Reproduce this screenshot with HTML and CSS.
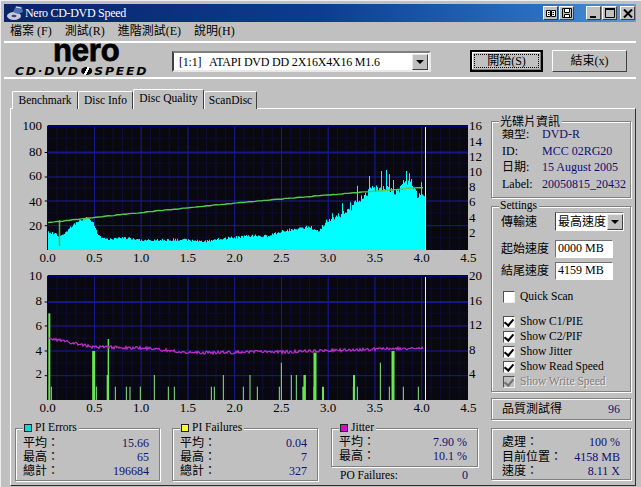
FILE: index.html
```html
<!DOCTYPE html>
<html lang="zh-Hant">
<head>
<meta charset="utf-8">
<title>Nero CD-DVD Speed</title>
<link rel="stylesheet" href="styles.css">
</head>
<body>
<div class="window">
  <div class="titlebar">
    <svg class="app-icon" width="18" height="16" viewBox="0 0 18 16"><ellipse cx="8" cy="11" rx="7" ry="4" fill="#c8c8d8"/><ellipse cx="8" cy="11" rx="2.5" ry="1.3" fill="#404870"/><path d="M7 7 L10 1 L16 2 L17 7 L12 9Z" fill="#5070b0"/><path d="M10 2 L15 3" stroke="#e0e8ff"/></svg>
    <span class="title-text">Nero CD-DVD Speed</span>
    <span class="caption-buttons">
      <span class="cap-btn"><svg width="10" height="9" viewBox="0 0 10 9"><path d="M0.5 1.5H4.5V7.5H0.5ZM5.5 1.5H9.5V7.5H5.5Z" fill="#fff" stroke="#000"/><path d="M2 3.5H3.5M2 5.5H3.5M6.5 3.5H8M6.5 5.5H8" stroke="#000"/></svg></span>
      <span class="cap-btn"><svg width="10" height="10" viewBox="0 0 10 10"><path d="M0.5 0.5H9.5V9.5H0.5Z" fill="#c0c0c0" stroke="#000"/><path d="M2.5 1V4.5H7.5V1M2.5 9V6.5H7.5V9" fill="#fff" stroke="#000"/></svg></span>
      <span class="cap-btn cap-first"><svg width="8" height="9" viewBox="0 0 8 9"><path d="M0 7H6V9H0Z" fill="#000"/></svg></span>
      <span class="cap-btn"><svg width="10" height="10" viewBox="0 0 10 10"><path d="M0.5 1.5H9.5V9.5H0.5Z" fill="none" stroke="#000"/><path d="M0 1H10" stroke="#000" stroke-width="2"/></svg></span>
      <span class="cap-btn cap-close"><svg width="10" height="9" viewBox="0 0 10 9"><path d="M1 0.5L9 8.5M9 0.5L1 8.5" stroke="#000" stroke-width="2"/></svg></span>
    </span>
  </div>
  <div class="menu">
    <span>檔案 (F)</span><span>測試(R)</span><span>進階測試(E)</span><span>說明(H)</span>
  </div>
  <div class="header">
    <div class="logo">
      <div class="logo-nero">nero</div>
      <div class="logo-sub">CD·DVD<i class="logo-disc"></i>SPEED</div>
    </div>
    <div class="drive-select">
      <span class="drive-text">[1:1]&nbsp;&nbsp; ATAPI DVD DD 2X16X4X16 M1.6</span>
      <span class="drop-btn"><i class="arrow"></i></span>
    </div>
    <div class="btn btn-default"><span class="focus">開始(S)</span></div>
    <div class="btn btn-exit">結束(x)</div>
  </div>
  <div class="tabs">
    <span class="tab tab-bench">Benchmark</span>
    <span class="tab tab-info">Disc Info</span>
    <span class="tab tab-active">Disc Quality</span>
    <span class="tab tab-scan">ScanDisc</span>
  </div>
  <div class="panel">
    <div class="left-col">
      <svg id="chart1" class="chart" width="479" height="150" viewBox="12 115 479 150"></svg>
      <svg id="chart2" class="chart" width="479" height="150" viewBox="12 265 479 150"></svg>
      <div class="stats">
        <div class="group stat-box stat-errors">
          <div class="legend legend-swatch"><i class="swatch sw-cyan"></i>PI Errors</div>
          <div class="row"><span>平均：</span><b>15.66</b></div>
          <div class="row"><span>最高：</span><b>65</b></div>
          <div class="row"><span>總計：</span><b>196684</b></div>
        </div>
        <div class="group stat-box stat-fail">
          <div class="legend legend-swatch"><i class="swatch sw-yellow"></i>PI Failures</div>
          <div class="row"><span>平均：</span><b>0.04</b></div>
          <div class="row"><span>最高：</span><b>7</b></div>
          <div class="row"><span>總計：</span><b>327</b></div>
        </div>
        <div class="jitter-col">
          <div class="group stat-box stat-jitter">
            <div class="legend legend-swatch"><i class="swatch sw-magenta"></i>Jitter</div>
            <div class="row"><span>平均：</span><b>7.90 %</b></div>
            <div class="row"><span>最高：</span><b>10.1 %</b></div>
          </div>
          <div class="row po-row"><span>PO Failures:</span><b>0</b></div>
        </div>
      </div>
    </div>
    <div class="right-col">
      <div class="group info-box">
        <div class="legend legend-big">光碟片資訊</div>
        <div class="info-row"><span>類型:</span><b>DVD-R</b></div>
        <div class="info-row"><span>ID:</span><b>MCC 02RG20</b></div>
        <div class="info-row"><span>日期:</span><b>15 August 2005</b></div>
        <div class="info-row"><span>Label:</span><b>20050815_20432</b></div>
      </div>
      <div class="group settings-box">
        <div class="legend">Settings</div>
        <div class="set-row set-speed">
          <span class="set-label">傳輸速</span>
          <span class="mini-select"><span>最高速度</span><span class="drop-btn"><i class="arrow"></i></span></span>
        </div>
        <div class="set-row set-start">
          <span class="set-label">起始速度</span><span class="field">0000 MB</span>
        </div>
        <div class="set-row set-end">
          <span class="set-label">結尾速度</span><span class="field">4159 MB</span>
        </div>
        <div class="check-row quick"><i class="check"></i>Quick Scan</div>
        <div class="checks">
          <div class="check-row"><i class="check on"></i>Show C1/PIE</div>
          <div class="check-row"><i class="check on"></i>Show C2/PIF</div>
          <div class="check-row"><i class="check on"></i>Show Jitter</div>
          <div class="check-row"><i class="check on"></i>Show Read Speed</div>
          <div class="check-row disabled"><i class="check on off"></i>Show Write Speed</div>
        </div>
      </div>
      <div class="group score-box">
        <span>品質測試得</span><b>96</b>
      </div>
      <div class="group progress-box">
        <div class="row"><span>處理：</span><b>100 %</b></div>
        <div class="row"><span>目前位置：</span><b>4158 MB</b></div>
        <div class="row"><span>速度：</span><b>8.11 X</b></div>
      </div>
    </div>
  </div>
</div>
<script src="chart.js"></script>
</body>
</html>
```
FILE: styles.css
```css
* { box-sizing: border-box; }
html, body { margin: 0; padding: 0; }
body {
  width: 641px; height: 487px; overflow: hidden;
  background: #c0c0c0; color: #000;
  font: 11.5px/14px "Liberation Serif", "Noto Sans CJK TC", serif;
}
.window {
  width: 641px; height: 487px; padding: 3px 5px 0 3px;
  border-top: 1px solid #efefef; border-left: 1px solid #efefef;
}
.titlebar {
  height: 18px; display: flex; align-items: center; color: #fff;
  background: linear-gradient(90deg, #0a246a 0%, #0c3c90 50%, #2a70c0 85%, #5a9ad8 100%);
  padding: 0 1px 0 2px;
}
.app-icon { margin-right: 1px; }
.title-text { font-size: 12px; letter-spacing: -0.3px; }
.caption-buttons { margin-left: auto; display: flex; }
.cap-btn {
  width: 15px; height: 14px; background: #c0c0c0; display: flex; align-items: center; justify-content: center;
  border: 1px solid; border-color: #fff #404040 #404040 #fff; margin-left: 1px;
}
.cap-first { margin-left: 12px; }
.cap-close { margin-left: 3px; }
.menu {
  height: 21px; display: flex; align-items: center; gap: 13px; padding: 0 6px 1px 6px;
  font-size: 12px; border-bottom: 2px solid; border-image: linear-gradient(#808080 50%, #fff 50%) 1;
}
.header {
  height: 36px; display: flex; align-items: flex-start;
  border-bottom: 2px solid; border-image: linear-gradient(#808080 50%, #fff 50%) 1;
  padding-left: 11px;
}
.logo { width: 157px; margin-top: -3px; position: relative; z-index: 1; }
.logo-nero {
  font: bold 31px/22px "Liberation Sans", sans-serif; padding-left: 38px;
  -webkit-text-stroke: 0.8px #000; letter-spacing: -0.2px;
}
.logo-sub {
  font: italic bold 11px/11px "DejaVu Sans", sans-serif; letter-spacing: 1.6px; white-space: nowrap;
  transform-origin: left; transform: scaleX(1.12); margin-top: 4px;
}
.logo-disc {
  display: inline-block; width: 10px; height: 8px; border-radius: 50%; margin: 0 2px 0 1px;
  background: linear-gradient(115deg, #000 42%, #fff 42%, #fff 58%, #000 58%);
}
.drive-select {
  width: 259px; height: 21px; margin-top: 8px; background: #fff; display: flex; align-items: center; justify-content: space-between;
  border: 2px solid; border-color: #808080 #e8e8e8 #e8e8e8 #404040; padding: 0 1px 0 5px; font-size: 12px; letter-spacing: -0.2px;
}
.drop-btn {
  width: 16px; height: 16px; background: #c0c0c0; display: flex; align-items: center; justify-content: center;
  border: 1px solid; border-color: #e8e8e8 #404040 #404040 #e8e8e8;
}
.arrow { width: 0; height: 0; border: 4px solid transparent; border-top: 4px solid #000; border-bottom: 0; }
.btn {
  height: 22px; background: #c0c0c0; display: flex; align-items: center; justify-content: center; font-size: 12px;
  border: 1px solid; border-color: #fff #404040 #404040 #fff;
}
.btn-default { width: 73px; margin: 7px 0 0 39px; border: 2px solid #000; box-shadow: inset -1px -1px 0 #808080, inset 1px 1px 0 #fff; padding: 2px; }
.focus { flex: 1; align-self: stretch; border: 1px dotted #000; text-align: center; line-height: 13px; }
.btn-exit { width: 75px; margin: 7px 0 0 9px; }
.tabs { height: 20px; padding: 2px 0 0 8px; display: flex; align-items: flex-end; position: relative; z-index: 2; margin-top: 10px; margin-bottom: -1px; }
.tab {
  height: 18px; line-height: 17px; background: #c0c0c0; text-align: center;
  border: 1px solid; border-color: #fff #404040 transparent #fff; border-bottom: 0; border-radius: 2px 2px 0 0;
}
.tab-bench { width: 66px; }
.tab-info { width: 55px; }
.tab-active { width: 71px; height: 20px; margin-top: -2px; line-height: 16px; padding-bottom: 3px; }
.tab-scan { width: 53px; }
.panel {
  width: 626px; height: 378px; margin-left: 6px; display: flex; padding: 6px 0 0 1px; background: #c0c0c0;
  border: 1px solid; border-color: #fff #303030 #303030 #fff;
}
.left-col { width: 479px; }
.chart { display: block; }
.chart text { font: 13px "Liberation Serif", serif; fill: #000; }
.right-col { width: 140px; padding-top: 6px; }
.group {
  border: 1px solid #808080; position: relative;
  box-shadow: 1px 1px 0 #fff, inset 1px 1px 0 #fff;
}
.legend { position: absolute; left: 7px; top: -8px; background: #c0c0c0; padding: 0 2px 0 1px; height: 13px; line-height: 13px; white-space: nowrap; }
.legend-big { font-size: 12px; top: -7px; height: 14px; line-height: 14px; }
.legend-swatch { display: flex; align-items: center; gap: 3px; }
.swatch { width: 8px; height: 8px; border: 1px solid #202020; display: block; }
.sw-cyan { background: #10d8d8; }
.sw-yellow { background: #f8f830; }
.sw-magenta { background: #d010c8; }
b { font-weight: 400; color: #101070; font-size: 12px; }
.row { display: flex; justify-content: space-between; height: 14px; line-height: 14px; }
.stats { display: flex; margin: 13px 0 0 3px; align-items: flex-start; }
.stat-box { padding: 7px 10px 0 7px; font-size: 12px; }
.stat-errors { width: 145px; height: 53px; }
.stat-fail { width: 146px; height: 53px; margin-left: 12px; }
.jitter-col { width: 147px; margin-left: 13px; }
.stat-jitter { height: 39px; padding-top: 6px; }
.legend-swatch { font-size: 11.5px; }
.po-row { padding: 0 10px 0 9px; margin-top: 1px; }
.info-box { height: 77px; padding: 4px 0 0 10px; }
.info-row { display: flex; height: 16.5px; line-height: 16px; font-size: 12px; }
.info-row span { width: 40px; flex: none; }
.settings-box { height: 186px; margin-top: 8px; padding: 0 0 0 10px; }
.set-row { display: flex; align-items: center; font-size: 12px; }
.set-label { flex: none; width: 54px; margin-left: -1px; }
.set-speed { margin-top: 5px; height: 19px; }
.mini-select {
  width: 69px; height: 19px; background: #fff; display: flex; align-items: center; justify-content: space-between; white-space: nowrap;
  border: 1px solid; border-color: #808080 #fff #fff #404040; padding-left: 2px;
}
.field {
  width: 58px; height: 18px; background: #fff; padding-left: 2px; line-height: 15px; font-size: 12px;
  border: 1px solid; border-color: #707070 #fff #fff #707070;
}
.set-start { margin-top: 9px; height: 18px; }
.set-end { margin-top: 4px; height: 18px; }
.check-row { display: flex; align-items: center; height: 15px; line-height: 15px; }
.quick { margin-top: 9px; }
.checks { margin-top: 10px; }
.check {
  width: 12px; height: 12px; background: #fff; margin: 0 5px 0 1px; flex: none; position: relative;
  border: 1px solid; border-color: #505050 #eee #eee #505050;
}
.check.on::after {
  content: ""; position: absolute; left: 2px; top: 0; width: 4px; height: 7px;
  border: solid #000; border-width: 0 2px 2px 0; transform: rotate(40deg);
}
.check.off { background: #c0c0c0; }
.check.off::after { border-color: #707070; }
.disabled { color: #808080; text-shadow: 1px 1px 0 #f0f0f0; }
.score-box { height: 22px; margin-top: 6px; display: flex; justify-content: space-between; align-items: center; padding: 0 10px; font-size: 12px; }
.progress-box { height: 52px; margin-top: 8px; padding: 6px 10px 0 10px; font-size: 12px; }
.progress-box .row { height: 14.5px; }
```
FILE: chart.js
```javascript
(function () {
  var NS = "http://www.w3.org/2000/svg";
  var X0 = 47.7, XSTEP = 46.75, XEND = 468;

  function el(svg, name, attrs, txt) {
    var e = document.createElementNS(NS, name);
    for (var k in attrs) e.setAttribute(k, attrs[k]);
    if (txt !== undefined) e.textContent = txt;
    svg.appendChild(e);
    return e;
  }
  function rng(seed) {
    return function () {
      seed = (seed * 1664525 + 1013904223) % 4294967296;
      return seed / 4294967296;
    };
  }
  function interp(pts, x) {
    for (var i = 1; i < pts.length; i++) {
      if (x <= pts[i][0]) {
        var a = pts[i - 1], b = pts[i];
        return a[1] + (b[1] - a[1]) * (x - a[0]) / (b[0] - a[0]);
      }
    }
    return pts[pts.length - 1][1];
  }

  function frame(svg, top, bottom, hLines, leftLabels, rightLabels) {
    el(svg, "rect", { x: X0, y: top, width: XEND - X0, height: bottom - top, fill: "#08080e" });
    var i, x;
    for (i = 0; i < 45; i++) {
      x = X0 + i * XSTEP / 5;
      el(svg, "path", { d: "M" + x + " " + top + "V" + bottom, stroke: "#0e0e38", "stroke-width": 1 });
    }
    var h = (bottom - top) / 10;
    for (i = 1; i < 10; i += 2) {
      el(svg, "path", { d: "M" + X0 + " " + (top + i * h) + "H" + XEND, stroke: "#0c0c34", "stroke-width": 1 });
    }
    for (i = 1; i < 9; i++) {
      x = X0 + i * XSTEP;
      el(svg, "path", { d: "M" + x + " " + top + "V" + bottom, stroke: "#1a1a98", "stroke-width": 1 });
    }
    hLines.forEach(function (y, n) {
      el(svg, "path", { d: "M" + X0 + " " + y + "H" + XEND, stroke: n === 0 ? "#16168c" : "#1a1a98", "stroke-width": n === 0 ? 2 : 1 });
      el(svg, "path", { d: "M" + (X0 - 3) + " " + y + "H" + X0, stroke: "#000" });
    });
    el(svg, "path", { d: "M" + X0 + " " + top + "H" + XEND, stroke: "#000070", "stroke-width": 2 });
    el(svg, "path", { d: "M" + X0 + " " + top + "V" + bottom, stroke: "#000040", "stroke-width": 1 });
    leftLabels.forEach(function (l) {
      el(svg, "text", { x: 42, y: l[1] + 4.5, "text-anchor": "end" }, l[0]);
    });
    rightLabels.forEach(function (l) {
      el(svg, "text", { x: 469, y: l[1] + 4.5 }, l[0]);
    });
    for (i = 0; i < 10; i++) {
      el(svg, "text", { x: X0 + i * XSTEP, y: bottom + 12, "text-anchor": "middle" }, (i * 0.5).toFixed(1));
    }
  }

  /* ---- top chart ---- */
  var c1 = document.getElementById("chart1");
  frame(c1, 126, 250, [152.5, 177, 201, 225.7],
    [["100", 125], ["80", 151], ["60", 175], ["40", 201], ["20", 225]],
    [["16", 125], ["14", 141], ["12", 156], ["10", 171], ["8", 186], ["6", 201], ["4", 217], ["2", 232]]);

  var z6 = function (zx, zy) { return [10 + zx / 3, 115 + zy / 3]; };
  var z7 = function (zx, zy) { return [250 + zx / 3, 115 + zy / 3]; };
  var profile = [
    z6(113, 350), z6(150, 362), z6(165, 352), z6(190, 328), z6(230, 306), z6(250, 325), z6(265, 362),
    z6(290, 374), z6(330, 366), z6(400, 376), z6(500, 373), z6(580, 379), z6(650, 369), z6(720, 362),
    z7(50, 363), z7(100, 347), z7(180, 334), z7(205, 352), z7(225, 320), z7(270, 302), z7(300, 282),
    z7(320, 254), z7(340, 244), z7(360, 222), z7(400, 218), z7(440, 232), z7(465, 195), z7(485, 202),
    z7(500, 238), z7(527, 242)
  ];
  var spikes = [z7(357, 183), z7(393, 168), z7(408, 165), z7(416, 178), z7(430, 195), z7(468, 168),
    z7(477, 175), z7(512, 202), z7(320, 212), z7(245, 295), z7(277, 265), z7(300, 262), z7(265, 295)];
  var r = rng(7);
  var d = "M48 250";
  for (var x = 48; x <= 425; x++) {
    var y = interp(profile, x);
    var amp = x > 340 ? 7 : x > 300 ? 4 : 2.6;
    y += (r() - 0.45) * amp;
    spikes.forEach(function (s) { if (Math.abs(s[0] - x) < 0.5) y = s[1]; });
    d += "H" + x + "V" + y.toFixed(1) + "H" + (x + 1);
  }
  d += "V250Z";
  el(c1, "path", { d: d, fill: "#00ffff" });
  el(c1, "path", { d: "M59.5 220V246", stroke: "#50b060", "stroke-width": 1.5 });
  var r2 = rng(11), gd = "";
  for (var gx = 48; gx <= 425; gx += 3) {
    var gy = 222.7 - (gx - 48) * (222.7 - 187.3) / 377 + (gx - 48) * (377 - (gx - 48)) / 377 * -0.02;
    gd += (gd ? "L" : "M") + gx + " " + (gy + (r2() - 0.5) * 0.6).toFixed(1);
  }
  el(c1, "path", { d: gd, fill: "none", stroke: "#58c850", "stroke-width": 1.4 });
  el(c1, "path", { d: "M425.5 127V250", stroke: "#f0f0f0", "stroke-width": 1 });

  /* ---- bottom chart ---- */
  var c2 = document.getElementById("chart2");
  frame(c2, 276, 400, [302, 326, 351, 375.7],
    [["10", 275], ["8", 300], ["6", 325], ["4", 350], ["2", 373]],
    [["20", 275], ["16", 300], ["12", 324], ["8", 349], ["4", 373]]);

  var bars = [
    [118, 145, 2], [124, 365, 1], [251, 258, 3], [259, 365, 1], [293, 330, 2], [295, 222, 1.4], [316, 365, 1], [349, 365, 1],
    [360, 365, 1], [391, 365, 1], [433, 330, 1], [475, 365, 1], [493, 365, 1], [604, 365, 1], [613, 365, 1], [640, 330, 1], [700, 365, 1]
  ].map(function (b) { return [10 + b[0] / 3, 265 + b[1] / 3, b[2]]; }).concat([
    [0, 330, 1], [22, 365, 1], [88, 365, 1], [94, 293, 1], [124, 330, 1], [139, 330, 1], [160, 365, 2], [164, 330, 2.4], [192, 365, 1],
    [195, 263, 3], [219, 365, 2], [310, 365, 1], [312, 330, 2], [322, 365, 1], [391, 293, 1], [418, 365, 1], [429, 258, 3], [460, 365, 1], [505, 365, 1]
  ].map(function (b) { return [250 + b[0] / 3, 265 + b[1] / 3, b[2]]; }));
  bars.forEach(function (b) {
    el(c2, "path", { d: "M" + b[0] + " " + b[1] + "V400", stroke: b[2] > 1 ? "#68e850" : "#88e888", "stroke-width": b[2] });
  });
  var jitter = [[48, 338], [93, 347], [143, 348], [193, 353], [250, 352], [283, 352], [350, 350], [423, 348]];
  var r3 = rng(23), jd = "";
  for (var jx = 48; jx <= 423; jx += 1) {
    jd += (jd ? "L" : "M") + jx + " " + (interp(jitter, jx) + (r3() - 0.5) * 3).toFixed(1);
  }
  el(c2, "path", { d: jd, fill: "none", stroke: "#c030c8", "stroke-width": 1.2 });
  el(c2, "path", { d: "M425.5 277V400", stroke: "#f0f0f0", "stroke-width": 1 });
})();
```
